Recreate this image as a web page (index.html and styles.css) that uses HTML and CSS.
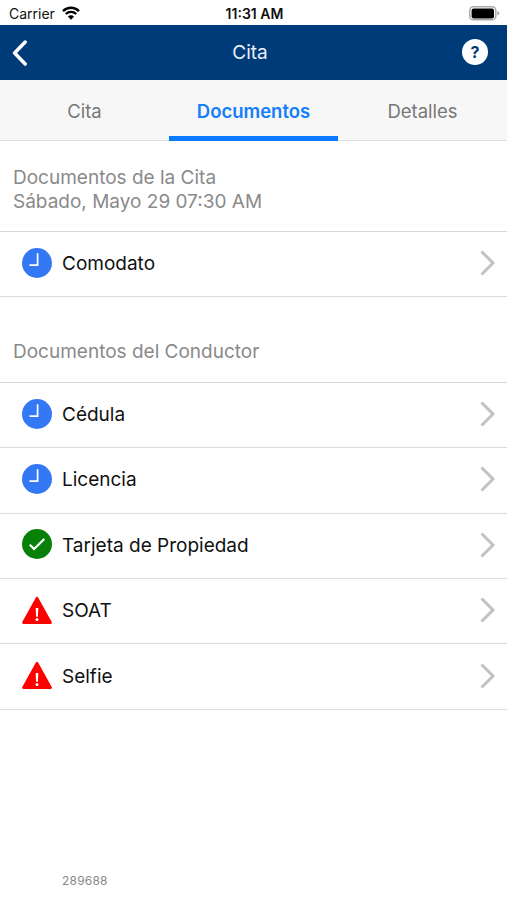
FILE: index.html
```html
<!DOCTYPE html>
<html lang="es">
<head>
<meta charset="utf-8">
<title>Cita</title>
<link rel="stylesheet" href="styles.css">
</head>
<body>
<svg class="defs" aria-hidden="true">
  <symbol id="clock" viewBox="0 0 30 30"><circle cx="15" cy="15" r="15" fill="#3478f6"/><path d="M15.6 5.2v11.9H7.5" fill="none" stroke="#fff" stroke-width="1.7"/></symbol>
  <symbol id="check" viewBox="0 0 30 30"><circle cx="15" cy="15" r="15" fill="#078007"/><path d="M7.8 15.7l4.3 4.3L22.3 10" fill="none" stroke="#fff" stroke-width="2.2"/></symbol>
  <symbol id="alert" viewBox="0 0 30 30"><path d="M15 3.1L28.6 27.6H1.4z" fill="#f00" stroke="#f00" stroke-width="2.6" stroke-linejoin="round"/><path d="M13.7 13h2.6l-.4 8.8h-1.8z" fill="#fff"/><circle cx="15" cy="24.6" r="1.5" fill="#fff"/></symbol>
  <symbol id="chevron" viewBox="0 0 16 26"><path d="M1.5 1.5L13 13 1.5 24.5" fill="none" stroke="#c2c2c2" stroke-width="3"/></symbol>
</svg>
<div class="screen">
  <div class="status">
    <div class="carrier"><span>Carrier</span>
      <svg class="wifi" viewBox="0 0 18 14"><path d="M1 5.1a11.4 11.4 0 0 1 16 0M3.8 8a7.5 7.5 0 0 1 10.4 0" fill="none" stroke="#000" stroke-width="2.4"/><path d="M9 13.7L5.9 10.5a4.4 4.4 0 0 1 6.2 0z"/></svg>
    </div>
    <div class="time">11:31 AM</div>
    <svg class="battery" viewBox="0 0 31 15"><rect x=".8" y=".8" width="26" height="13" rx="3.6" fill="#fff" stroke="#aaa" stroke-width="1.5"/><rect x="2.6" y="2.6" width="22.4" height="9.8" rx="2"/><path d="M28.3 5q2 .6 2 2.3t-2 2.3z" fill="#aaa"/></svg>
  </div>
  <header class="nav">
    <svg class="back" viewBox="0 0 16 26"><path d="M13.2 2L2.6 13l10.6 11" fill="none" stroke="#fff" stroke-width="3.5" stroke-linecap="round" stroke-linejoin="round"/></svg>
    <h1>Cita</h1>
    <div class="help">?</div>
  </header>
  <nav class="tabs">
    <div class="tab"><span class="t-cita">Cita</span></div>
    <div class="tab active"><span class="t-doc">Documentos</span></div>
    <div class="tab"><span class="t-det">Detalles</span></div>
  </nav>
  <div class="heading first"><span class="h-cita">Documentos de la Cita</span><span class="h-date">Sábado, Mayo 29 07:30 AM</span></div>
  <div class="list">
    <div class="row"><svg class="icon"><use href="#clock"/></svg><span class="label comodato">Comodato</span><svg class="chev"><use href="#chevron"/></svg></div>
  </div>
  <div class="heading second"><span class="h-cond">Documentos del Conductor</span></div>
  <div class="list">
    <div class="row"><svg class="icon"><use href="#clock"/></svg><span class="label cedula">Cédula</span><svg class="chev"><use href="#chevron"/></svg></div>
    <div class="row"><svg class="icon"><use href="#clock"/></svg><span class="label licencia">Licencia</span><svg class="chev"><use href="#chevron"/></svg></div>
    <div class="row"><svg class="icon"><use href="#check"/></svg><span class="label tarjeta">Tarjeta de Propiedad</span><svg class="chev"><use href="#chevron"/></svg></div>
    <div class="row"><svg class="icon"><use href="#alert"/></svg><span class="label soat">SOAT</span><svg class="chev"><use href="#chevron"/></svg></div>
    <div class="row"><svg class="icon"><use href="#alert"/></svg><span class="label selfie">Selfie</span><svg class="chev"><use href="#chevron"/></svg></div>
  </div>
  <footer>289688</footer>
</div>
</body>
</html>
```

FILE: styles.css
```css
* { box-sizing: border-box; }
body { margin: 0; background: #fff; font-family: Inter, "Liberation Sans", sans-serif; color: #111; }
.defs { display: none; }
.screen { display: flex; flex-direction: column; width: 507px; height: 900px; overflow: hidden; }
.status { display: grid; grid-template-columns: 1fr auto 1fr; align-items: center; height: 25px; padding: 2px 7px 0 9px; font-size: 14px; line-height: 22px; }
.carrier { display: flex; align-items: center; gap: 7px; }
.wifi { width: 18px; height: 14px; margin-top: -1px; }
.time { font-weight: 600; }
.battery { width: 31px; height: 15px; justify-self: end; }
.nav { display: grid; grid-template-columns: 1fr auto 1fr; align-items: center; height: 55px; padding: 0 19px 0 12px; background: #003b79; color: #fff; }
.back { width: 16px; height: 26px; }
.nav h1 { margin: 0; font-size: 19px; font-weight: 400; line-height: 24px; color: #e9f0f8; }
.help { justify-self: end; width: 26px; height: 26px; margin-top: -2px; border-radius: 50%; background: #fff; color: #003b79; font-size: 16px; font-weight: 700; line-height: 26px; text-align: center; }
.tabs { display: grid; grid-template-columns: repeat(3, 1fr); height: 61px; background: #f7f7f7; border-bottom: 1px solid #dedede; }
.tab { display: flex; justify-content: center; height: 61px; padding-top: 19px; font-size: 18.5px; line-height: 24px; color: #777; }
.tab.active { color: #147efb; font-weight: 600; border-bottom: 5px solid #087aff; }
.heading { display: flex; flex-direction: column; align-items: flex-start; padding-left: 13px; font-size: 19px; line-height: 23.5px; color: #8a8a8a; }
.first { height: 90px; padding-top: 25px; }
.second { height: 84.5px; padding-top: 43px; }
.list { border-top: 1px solid #d9d9d9; }
.row { display: flex; align-items: center; height: 65.4px; padding: 0 11px 0 22px; border-bottom: 1.5px solid #dcdcdc; }
.icon { width: 30px; height: 30px; margin-top: -3px; flex: none; }
.label { margin-left: 10px; font-size: 19px; line-height: 24px; }
.chev { width: 16px; height: 26px; margin: -2px 0 0 auto; }
footer { margin-top: auto; padding: 0 0 11px 62px; font-size: 12px; line-height: 16px; color: #888; letter-spacing: .2px; }
```
